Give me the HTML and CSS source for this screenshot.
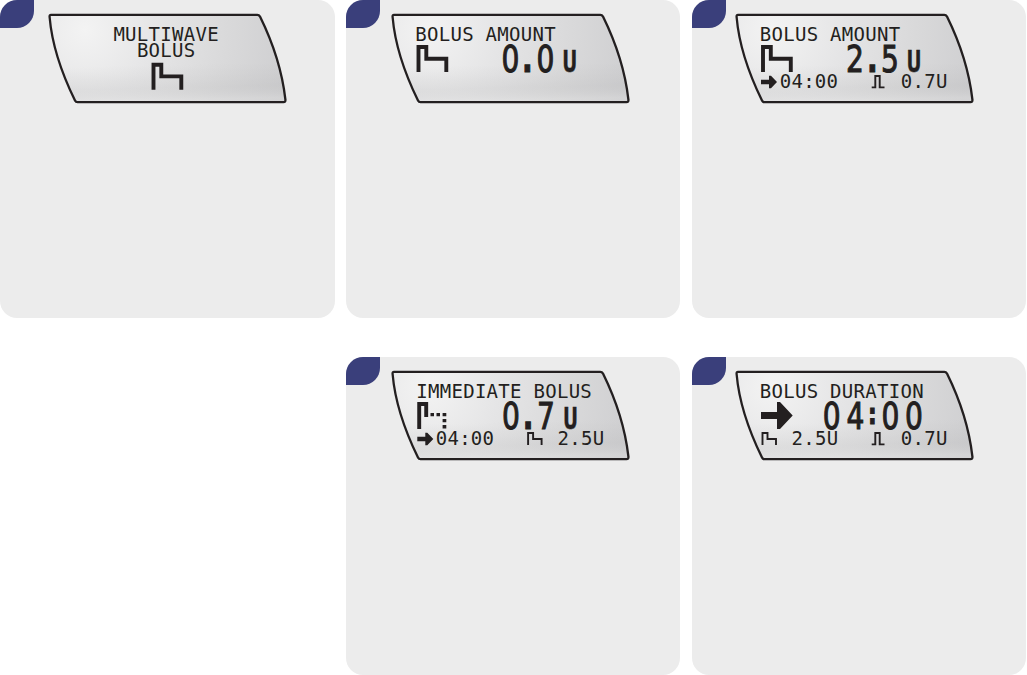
FILE: index.html
```html
<!DOCTYPE html>
<html lang="en">
<head>
<meta charset="utf-8">
<title>Multiwave bolus</title>
<link rel="stylesheet" href="styles.css">
</head>
<body>
<svg class="defs" width="0" height="0" aria-hidden="true">
  <defs>
    <radialGradient id="glass" gradientUnits="userSpaceOnUse" cx="85" cy="30" r="205">
      <stop offset="0" stop-color="#f3f3f3"/>
      <stop offset=".35" stop-color="#e5e5e6"/>
      <stop offset=".7" stop-color="#d9d9da"/>
      <stop offset="1" stop-color="#cfcfd1"/>
    </radialGradient>
    <linearGradient id="shade" x1="0" y1="0" x2="0.06" y2="1">
      <stop offset=".6" stop-color="#aaa" stop-opacity="0"/>
      <stop offset=".86" stop-color="#aaa" stop-opacity=".16"/>
      <stop offset="1" stop-color="#ddd" stop-opacity=".3"/>
    </linearGradient>
    <path id="bezel" d="M51 14.8H257.3Q259 14.8 260 16.6C272 41 282 70 285.4 99.500Q285.700 102.200 283.500 102.200H77.500Q75.800 102.200 75 100.500C62 74 52 45 49.600 17Q49.400 14.800 51 14.800Z"/>
    <g id="screen">
      <use href="#bezel" fill="url(#glass)"/>
      <use href="#bezel" fill="url(#shade)" stroke="#231f20" stroke-width="2.3"/>
    </g>
    <path id="wave" class="line" stroke-width="3.900" d="M75.500 72V47H83.300V58.700H103.300V72"/>
    <path id="wave-small" class="line" stroke-width="1.900" d="M75.500 88V76H80.500V82H89V88"/>
    <path id="pulse-small" class="line" stroke-width="1.900" d="M184.700 87.400H188.300V76H192.700V87.400H197.500"/>
    <path id="arrow-small" class="solid" d="M74 79.800H82V75.800H84L90 82L84 88.200H82V84.200H74Z"/>
  </defs>
</svg>
<main class="steps">
  <section class="card">
    <div class="tab"></div>
    <svg class="screen screen-left" viewBox="47 12 242 94">
      <use href="#screen"/>
      <text class="lcd" x="113.400" y="40.900">MULTIWAVE</text>
      <text class="lcd" x="136.900" y="56.900">BOLUS</text>
      <use href="#wave" x="78" y="17.700"/>
    </svg>
  </section>
  <section class="card">
    <div class="tab"></div>
    <svg class="screen screen-center" viewBox="47 12 242 94">
      <use href="#screen"/>
      <text class="lcd" x="72.300" y="40.900">BOLUS AMOUNT</text>
      <use href="#wave"/>
      <g transform="scale(.75 1)"><text class="big" x="223.300 245.700 269.900" y="71.600">0<tspan class="dot">.</tspan>0</text></g>
      <g transform="scale(.75 1)"><text class="unit" x="302.200" y="71.700">U</text></g>
    </svg>
  </section>
  <section class="card">
    <div class="tab"></div>
    <svg class="screen screen-right" viewBox="47 12 242 94">
      <use href="#screen"/>
      <text class="lcd" x="72.800" y="40.900">BOLUS AMOUNT</text>
      <use href="#wave" x=".5"/>
      <g transform="scale(.75 1)"><text class="big" x="224 247 270.700" y="71.600">2<tspan class="dot">.</tspan>5</text></g>
      <g transform="scale(.75 1)"><text class="unit" x="302.700" y="71.700">U</text></g>
      <use href="#arrow-small"/>
      <text class="lcd" x="92.700" y="88.300">04:00</text>
      <use href="#pulse-small"/>
      <text class="lcd" x="213.800" y="88.300">0.7U</text>
    </svg>
  </section>
  <section class="card card-second">
    <div class="tab"></div>
    <svg class="screen screen-center" viewBox="47 12 242 94">
      <use href="#screen"/>
      <text class="lcd" x="73.300" y="40.900">IMMEDIATE BOLUS</text>
      <path class="line" stroke-width="3.900" d="M76.200 72V47H83.200V60"/>
      <path class="solid" d="M87.500 56h3.500v3.300h-3.500zM93.500 56h3.500v3.300h-3.500zM99.600 56h3.700v3.300h-3.700zM99.600 62h3.700v3.300h-3.700zM99.600 68h3.700v3.600h-3.700z"/>
      <g transform="scale(.75 1)"><text class="big" x="224 246.700 270.700" y="71.600">0<tspan class="dot">.</tspan>7</text></g>
      <g transform="scale(.75 1)"><text class="unit" x="303.300" y="71.700">U</text></g>
      <use href="#arrow-small" x=".3"/>
      <text class="lcd" x="92.700" y="88.300">04:00</text>
      <use href="#wave-small" x="109.600"/>
      <text class="lcd" x="214.500" y="88.300">2.5U</text>
    </svg>
  </section>
  <section class="card">
    <div class="tab"></div>
    <svg class="screen screen-right" viewBox="47 12 242 94">
      <use href="#screen"/>
      <text class="lcd" x="72.800" y="40.900">BOLUS DURATION</text>
      <path class="solid" d="M74 55H90V45H93L105.700 58.500L93 72H90V62H74Z"/>
      <g transform="scale(.75 1)"><text class="big" x="193 224.700 247 271.300 302.700" y="71.600 71.600 67.300 71.600 71.600">04<tspan class="colon">:</tspan>00</text></g>
      <use href="#wave-small"/>
      <text class="lcd" x="104.500" y="88.300">2.5U</text>
      <use href="#pulse-small"/>
      <text class="lcd" x="213.800" y="88.300">0.7U</text>
    </svg>
  </section>
</main>
</body>
</html>
```
FILE: styles.css
```css
body {
  margin: 0;
  background: #fff;
  overflow: hidden;
}

.defs {
  display: block;
}

.steps {
  display: grid;
  grid-template-columns: repeat(3, 334.500px);
  grid-template-rows: repeat(2, 317.500px);
  column-gap: 11.300px;
  row-gap: 39.500px;
}

.card {
  background: #ececec;
  border-radius: 17px;
  display: flex;
  align-items: flex-start;
}

.card-second {
  grid-column: 2;
}

.tab {
  width: 34.300px;
  height: 28px;
  flex: none;
  background: #3a3f7b;
  border-radius: 17px 0 17px 0;
}

.screen {
  width: 242px;
  height: 94px;
  flex: none;
  margin-top: 12px;
}

.screen-left {
  margin-left: 12.700px;
}

.screen-center {
  margin-left: 10.400px;
}

.screen-right {
  margin-left: 8.100px;
}

.lcd {
  font: 19px "DejaVu Sans Mono", monospace;
  letter-spacing: .28px;
  fill: #231f20;
  white-space: pre;
}

.big {
  font: 37.500px "DejaVu Sans", sans-serif;
  text-anchor: middle;
  fill: #231f20;
  stroke: #231f20;
  stroke-width: 1.100px;
}

.dot {
  font-weight: bold;
}

.colon {
  font-size: 29px;
  font-weight: bold;
}

.unit {
  font: bold 31px "DejaVu Sans Mono", monospace;
  text-anchor: middle;
  fill: #231f20;
  stroke: #231f20;
  stroke-width: .4px;
}

.line {
  fill: none;
  stroke: #231f20;
}

.solid {
  fill: #231f20;
}
```
